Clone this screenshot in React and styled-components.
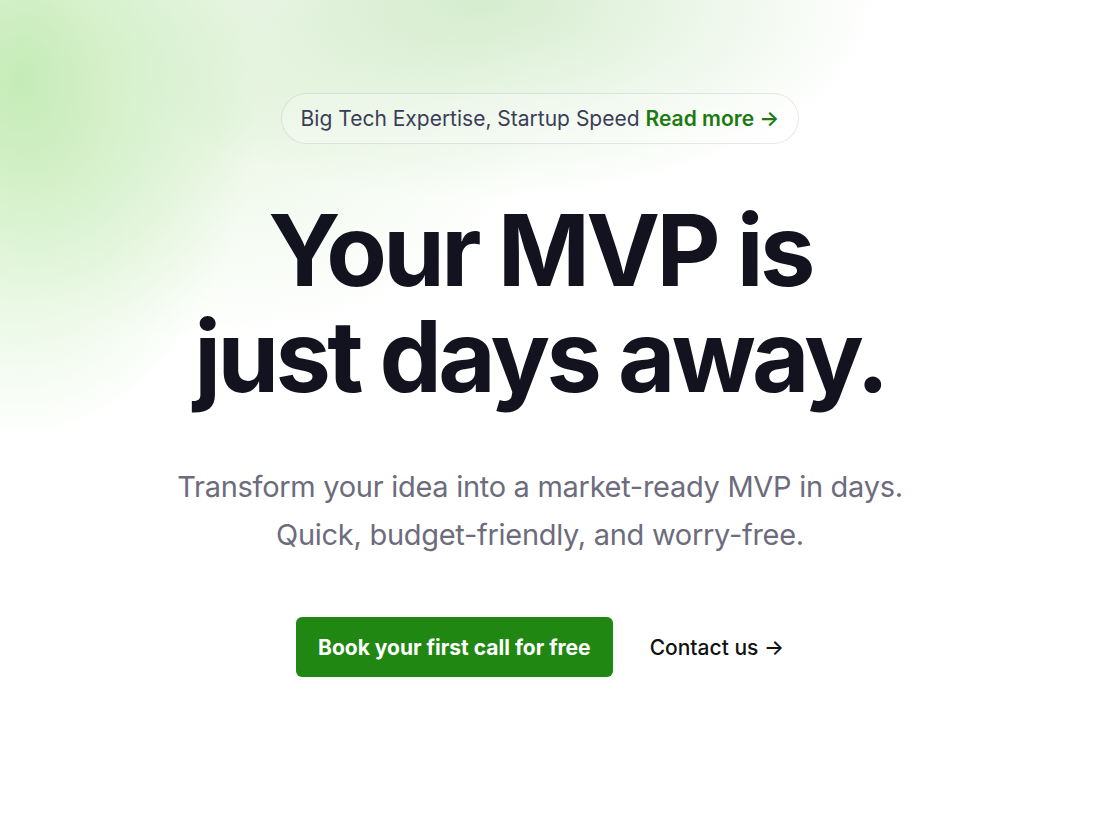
import React from "react";
import styled, { createGlobalStyle } from "styled-components";

const GlobalStyle = createGlobalStyle`
  html, body {
    margin: 0;
    padding: 0;
    background: #ffffff;
    font-family: Inter, "Noto Sans", sans-serif;
  }
`;

const Hero = styled.section`
  position: relative;
  overflow: hidden;
  width: 100%;
  height: 825px;
  display: flex;
  flex-direction: column;
  align-items: center;
  padding: 93px 20px 0 0;
  box-sizing: border-box;
  background:
    radial-gradient(ellipse 240px 360px at 20px 80px, rgba(175, 228, 155, 0.7), rgba(200, 235, 190, 0) 100%),
    radial-gradient(ellipse 400px 200px at 480px 0px, rgba(195, 228, 185, 0.7), rgba(210, 235, 200, 0) 100%),
    radial-gradient(ellipse 320px 220px at 220px 120px, rgba(218, 240, 208, 0.55), rgba(230, 245, 225, 0) 100%),
    #ffffff;
`;

const Badge = styled.a`
  display: inline-flex;
  align-items: center;
  gap: 6px;
  height: 51px;
  padding: 0 19px;
  box-sizing: border-box;
  border: 1px solid rgba(20, 30, 60, 0.1);
  border-radius: 999px;
  font-size: 21px;
  color: #3b3d58;
  text-decoration: none;
  background: rgba(255, 255, 255, 0.25);
`;

const BadgeLink = styled.span`
  color: #1c7a10;
  font-weight: 600;
`;

const Headline = styled.h1`
  margin: 53px 0 0;
  font-size: 99px;
  line-height: 106px;
  font-weight: 700;
  letter-spacing: -0.037em;
  color: #12131f;
  text-align: center;
`;

const Lead = styled.p`
  margin: 54px 0 0;
  font-size: 29px;
  line-height: 48px;
  color: #6c6c7c;
  text-align: center;
  letter-spacing: -0.01em;
`;

const Actions = styled.div`
  margin-top: 58px;
  display: flex;
  align-items: center;
  gap: 37px;
`;

const Primary = styled.a`
  display: inline-flex;
  align-items: center;
  justify-content: center;
  height: 60px;
  padding: 0 22px;
  border-radius: 6px;
  background: #1f8712;
  color: #ffffff;
  font-size: 21px;
  font-weight: 700;
  text-decoration: none;
`;

const Secondary = styled.a`
  font-size: 21px;
  font-weight: 500;
  color: #111111;
  text-decoration: none;
`;

export default function App() {
  return (
    <>
      <GlobalStyle />
      <Hero>
        <Badge href="#">
          Big Tech Expertise, Startup Speed
          <BadgeLink>Read more →</BadgeLink>
        </Badge>
        <Headline>
          Your MVP is
          <br />
          just days away.
        </Headline>
        <Lead>
          Transform your idea into a market-ready MVP in days.
          <br />
          Quick, budget-friendly, and worry-free.
        </Lead>
        <Actions>
          <Primary href="#">Book your first call for free</Primary>
          <Secondary href="#">Contact us →</Secondary>
        </Actions>
      </Hero>
    </>
  );
}
